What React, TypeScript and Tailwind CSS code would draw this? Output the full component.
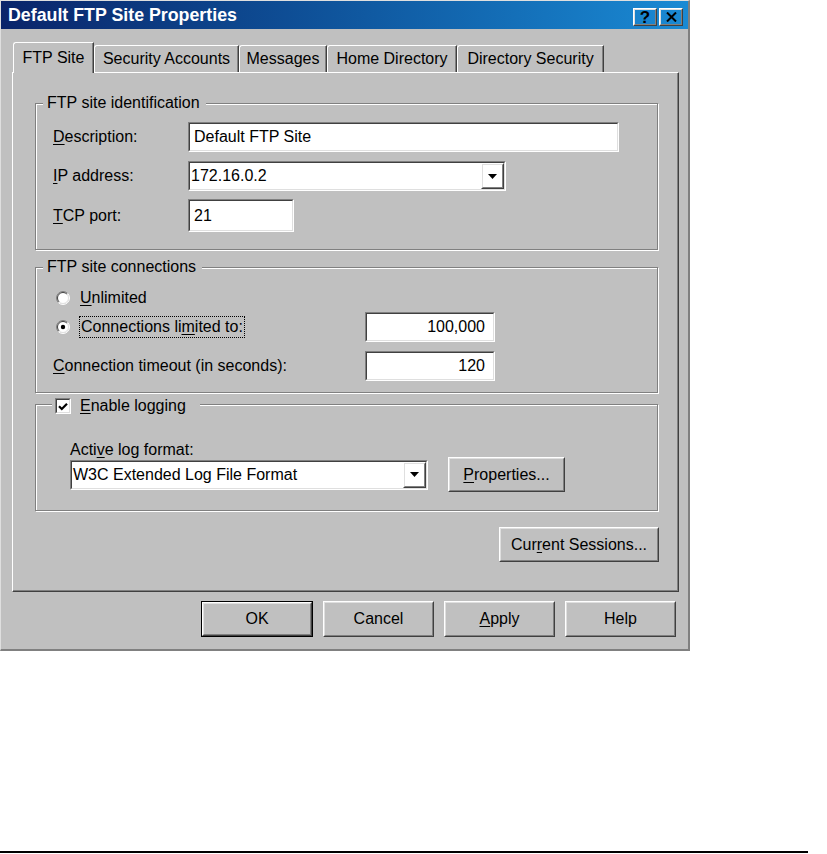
import type { ReactNode } from 'react';

function Raised({ className = '', children, isDefault = false }: { className?: string; children?: ReactNode; isDefault?: boolean }) {
  const inner = (
    <div className="h-full border border-t-white border-l-white border-r-[#404040] border-b-[#404040]">
      <div className="h-full flex items-center justify-center border border-t-[#dfdfdf] border-l-[#dfdfdf] border-r-[#808080] border-b-[#808080]">
        {children}
      </div>
    </div>
  );
  if (isDefault) {
    return <div className={`border border-black ${className}`}>{inner}</div>;
  }
  return <div className={className}>{inner}</div>;
}

function Field({ className = '', children, right = false }: { className?: string; children?: ReactNode; right?: boolean }) {
  return (
    <div className={`border border-t-[#808080] border-l-[#808080] border-r-white border-b-white ${className}`}>
      <div
        className={`h-full bg-white flex items-center border border-t-[#404040] border-l-[#404040] border-r-[#dfdfdf] border-b-[#dfdfdf] ${
          right ? 'justify-end pr-[8px]' : 'pl-[4px]'
        }`}
      >
        {children}
      </div>
    </div>
  );
}

function DropArrow() {
  return (
    <svg width="9" height="5" viewBox="0 0 9 5">
      <path d="M0 0H9L4.5 5Z" fill="#000" />
    </svg>
  );
}

function Combo({ className = '', text }: { className?: string; text: string }) {
  return (
    <div className={`border border-t-[#808080] border-l-[#808080] border-r-white border-b-white ${className}`}>
      <div className="h-full bg-white flex items-center border border-t-[#404040] border-l-[#404040] border-r-[#dfdfdf] border-b-[#dfdfdf]">
        <span className="flex-1 pl-[1px] whitespace-nowrap">{text}</span>
        <Raised className="w-[23px] h-full">
          <DropArrow />
        </Raised>
      </div>
    </div>
  );
}

function Group({ label, className = '', children }: { label: ReactNode; className?: string; children?: ReactNode }) {
  return (
    <div className={`relative border border-[#808080] shadow-[inset_1px_1px_0_#fff,1px_1px_0_#fff] ${className}`}>
      {label}
      {children}
    </div>
  );
}

function Legend({ children }: { children: ReactNode }) {
  return (
    <div className="absolute left-[7px] top-[-10px] h-[18px] flex items-center bg-[#c0c0c0] pl-[4px] pr-[6px] whitespace-nowrap">
      {children}
    </div>
  );
}

function Radio({ checked }: { checked?: boolean }) {
  return (
    <svg width="14" height="14" viewBox="0 0 14 14" className="shrink-0">
      <circle cx="7" cy="7" r="6" fill="#fff" />
      <path d="M2.4 11.6A6.5 6.5 0 0 1 11.6 2.4" stroke="#808080" fill="none" />
      <path d="M11.6 2.4A6.5 6.5 0 0 1 2.4 11.6" stroke="#fff" fill="none" />
      <path d="M3.1 10.9A5.5 5.5 0 0 1 10.9 3.1" stroke="#404040" fill="none" />
      <path d="M10.9 3.1A5.5 5.5 0 0 1 3.1 10.9" stroke="#dfdfdf" fill="none" />
      {checked && <circle cx="7" cy="7" r="2.2" fill="#000" />}
    </svg>
  );
}

function Checkbox() {
  return (
    <div className="w-[16px] h-[16px] shrink-0 border border-t-[#808080] border-l-[#808080] border-r-white border-b-white">
      <div className="h-full bg-white border border-t-[#404040] border-l-[#404040] border-r-[#dfdfdf] border-b-[#dfdfdf] flex items-center justify-center">
        <svg width="10" height="9" viewBox="0 0 10 9">
          <path d="M1 4.2L3.8 7L9 1.8" stroke="#000" strokeWidth="2.2" fill="none" />
        </svg>
      </div>
    </div>
  );
}

const U = ({ children }: { children: ReactNode }) => <u className="underline decoration-1 underline-offset-[2px]">{children}</u>;

const tabs = [
  { name: 'Security Accounts', w: 'w-[145px]' },
  { name: 'Messages', w: 'w-[88px]' },
  { name: 'Home Directory', w: 'w-[130px]' },
  { name: 'Directory Security', w: 'w-[147px]' },
];

export default function App() {
  return (
    <div className="w-[827px] h-[854px] bg-white flex flex-col font-['Liberation_Sans',Arial,sans-serif] text-[16px] text-black">
      <div className="w-[690px] h-[651px] shrink-0 flex flex-col bg-[#c0c0c0] border-t border-l border-[#dfdfdf] border-r-2 border-b-2 border-r-[#808080] border-b-[#808080]">
        {/* title bar */}
        <div className="h-[28px] flex items-center bg-linear-to-r from-[#0a246a] to-[#1a8ad4] pl-[7px] pr-[5px]">
          <span className="flex-1 text-white font-bold text-[17.8px] whitespace-nowrap">Default FTP Site Properties</span>
          <div className="flex gap-[2px] mt-[4px]">
            <Raised className="w-[24px] h-[18px]">
              <span className="font-bold text-[17px] leading-none">?</span>
            </Raised>
            <Raised className="w-[24px] h-[18px]">
              <svg width="11" height="10" viewBox="0 0 11 10">
                <path d="M1 0.5L10 9.5M10 0.5L1 9.5" stroke="#000" strokeWidth="2" />
              </svg>
            </Raised>
          </div>
        </div>

        {/* tabs */}
        <div className="mt-[13px] h-[30px] flex items-end pl-[12px]">
          <div className="relative z-10 w-[81px] h-[31px] -mb-[1px] flex items-center justify-center bg-[#c0c0c0] border-t border-l border-white border-r border-r-[#404040] rounded-tl-[3px] shadow-[inset_-1px_0_0_#808080]">
            FTP Site
          </div>
          {tabs.map((t) => (
            <div
              key={t.name}
              className={`${t.w} h-[27px] flex items-center justify-center border-t border-l border-white border-r border-r-[#404040] rounded-tl-[3px] shadow-[inset_-1px_0_0_#808080] whitespace-nowrap`}
            >
              {t.name}
            </div>
          ))}
        </div>

        {/* tab panel */}
        <div className="ml-[11px] w-[667px] h-[520px] flex flex-col border border-t-white border-l-white border-r-[#404040] border-b-[#404040] shadow-[inset_-1px_-1px_0_#808080]">
          <Group
            className="mt-[30px] ml-[22px] w-[623px] h-[147px] pt-[18px]"
            label={<Legend>FTP site identification</Legend>}
          >
            <div className="flex items-center h-[30px] pl-[17px]">
              <span className="w-[135px]">
                <U>D</U>escription:
              </span>
              <Field className="w-[431px] h-[30px]">Default FTP Site</Field>
            </div>
            <div className="flex items-center h-[30px] mt-[9px] pl-[17px]">
              <span className="w-[135px]">
                <U>I</U>P address:
              </span>
              <Combo className="w-[318px] h-[30px]" text="172.16.0.2" />
            </div>
            <div className="flex items-center h-[33px] mt-[8px] pl-[17px]">
              <span className="w-[135px]">
                <U>T</U>CP port:
              </span>
              <Field className="w-[106px] h-[33px]">21</Field>
            </div>
          </Group>

          <Group
            className="mt-[17px] ml-[22px] w-[623px] h-[126px] pt-[20px]"
            label={<Legend>FTP site connections</Legend>}
          >
            <div className="flex items-center h-[20px] pl-[20px]">
              <Radio />
              <span className="ml-[10px]">
                <U>U</U>nlimited
              </span>
            </div>
            <div className="flex items-center h-[30px] mt-[4px] pl-[20px]">
              <div className="w-[309px] flex items-center">
                <Radio checked />
                <span className="ml-[9px] h-[22px] flex items-center px-[1px] border border-dotted border-black">
                  Connections li<U>m</U>ited to:
                </span>
              </div>
              <Field right className="w-[130px] h-[30px]">100,000</Field>
            </div>
            <div className="flex items-center h-[30px] mt-[9px] pl-[17px]">
              <span className="w-[312px]">
                <U>C</U>onnection timeout (in seconds):
              </span>
              <Field right className="w-[130px] h-[30px]">120</Field>
            </div>
          </Group>

          <Group
            className="mt-[11px] ml-[22px] w-[623px] h-[107px] pl-[34px]"
            label={
              <div className="absolute left-[16px] top-[-9px] h-[20px] flex items-center bg-[#c0c0c0] pl-[3px] pr-[14px]">
                <Checkbox />
                <span className="ml-[9px] whitespace-nowrap">
                  <U>E</U>nable logging
                </span>
              </div>
            }
          >
            <div className="mt-[37px] h-[15px] leading-[15px]">
              Acti<U>v</U>e log format:
            </div>
            <div className="flex items-center h-[35px]">
              <Combo className="w-[358px] h-[30px]" text="W3C Extended Log File Format" />
              <Raised className="ml-[20px] w-[117px] h-[35px]">
                <span>
                  <U>P</U>roperties...
                </span>
              </Raised>
            </div>
          </Group>

          <div className="mt-[16px] flex justify-end pr-[19px]">
            <Raised className="w-[160px] h-[35px]">
              <span>
                Cur<U>r</U>ent Sessions...
              </span>
            </Raised>
          </div>
        </div>

        {/* dialog buttons */}
        <div className="mt-[9px] flex justify-end gap-[10px] pr-[12px]">
          <Raised isDefault className="w-[112px] h-[36px]">OK</Raised>
          <Raised className="w-[111px] h-[36px]">Cancel</Raised>
          <Raised className="w-[111px] h-[36px]">
            <span>
              <U>A</U>pply
            </span>
          </Raised>
          <Raised className="w-[111px] h-[36px]">Help</Raised>
        </div>
      </div>

      <div className="mt-auto mb-[1px] w-[808px] h-[2px] bg-black" />
    </div>
  );
}
